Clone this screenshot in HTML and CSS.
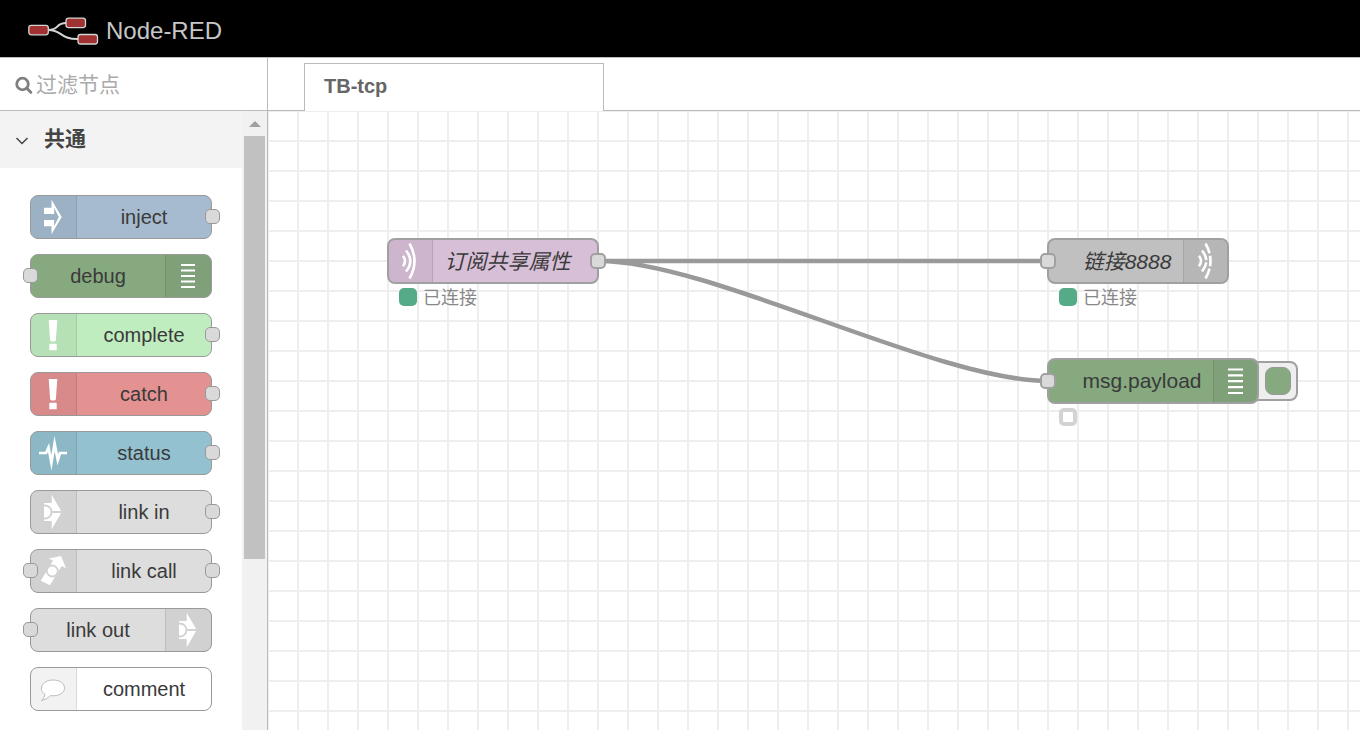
FILE: index.html
```html
<!DOCTYPE html>
<html lang="zh-CN">
<head>
<meta charset="utf-8">
<title>Node-RED</title>
<link rel="stylesheet" href="styles.css">
</head>
<body>
<svg class="sprite" aria-hidden="true">
  <symbol id="i-inject" viewBox="0 0 45 42"><path fill="#fff" d="M20.5 3.700 30.700 21 20.500 38.300V30.300H13V24H23.200V30L27.800 21 23.200 12V18H13V11.700H20.500Z"/></symbol>
  <symbol id="i-debug" viewBox="0 0 45 42"><path stroke="#fff" stroke-width="2.2" d="M15 10H29M15 15.5H29M15 21H29M15 26.5H29M15 32H29"/></symbol>
  <symbol id="i-debug-lg" viewBox="0 0 43 42"><path stroke="#fff" stroke-width="2.2" d="M14 9.500H29M14 15.400H29M14 21.200H29M14 27.100H29M14 33H29"/></symbol>
  <symbol id="i-alert" viewBox="0 0 45 42"><path fill="#fff" d="M17.700 6H26.300L24.900 26Q24.600 27.400 23.500 27.400H20.500Q19.400 27.400 19.100 26ZM19 29.700H25Q25.700 29.700 25.700 30.500V36.300H18.300V30.500Q18.300 29.700 19 29.700Z"/></symbol>
  <symbol id="i-status" viewBox="0 0 45 42"><path fill="none" stroke="#fff" stroke-width="2.700" stroke-miterlimit="20" d="M8 21H15L17.500 15.500 20.400 31 23.600 11.500 26.800 28 29 21H36"/></symbol>
  <symbol id="i-link" viewBox="0 0 45 42"><path fill="#fff" d="M13 12H20.700V3.700L30.700 21 20.700 38.300V30H13Z"/><path fill="none" stroke="#d2d2d2" stroke-width="1.800" d="M12 14.500H14A6.500 6.500 0 0 1 14 27.500H12M20.500 21H31"/></symbol>
  <symbol id="i-call" viewBox="0 0 45 42"><path fill="#fff" d="M9.700 30.700 22 10.800 18 8.500 30 6 35 18.300 30.600 16 19 35.200Z"/><circle cx="21.300" cy="21" r="5.500" fill="#fff" stroke="#d2d2d2" stroke-width="1.800"/></symbol>
  <symbol id="i-comment" viewBox="0 0 45 42"><path fill="#fff" stroke="#bdbdbd" d="M14 26.400C7 22.500 10.500 12 22 12 29 12 33.500 15.600 33.500 20 33.500 25 27.500 28.600 19.500 27.600 16.500 30.500 13.500 31.800 10.400 32.600 12.600 30.600 13.800 28.700 14 26.400Z"/></symbol>
  <symbol id="i-tcpin" viewBox="0 0 43 42"><path fill="none" stroke="#fff" stroke-width="2.600" d="M20.500 3.500Q30.500 21 20.500 38.500M17 10.500Q25.600 21 17 31.500M14 15.800Q18 21 14 26.200"/></symbol>
  <symbol id="i-tcpout" viewBox="-1 0 43 42"><g fill="none" stroke="#fff" stroke-width="2.600"><path stroke-dasharray="10.500 2.500 10.600 2.500 12" d="M20.500 3.500Q30.500 21 20.500 38.500"/><path stroke-dasharray="10.700 2.200 14" d="M17 10.500Q25.600 21 17 31.500"/><path d="M14 15.800Q18 21 14 26.200"/></g></symbol>
</svg>

<header class="header">
  <svg class="logo" width="72" height="30" viewBox="0 0 72 30" aria-hidden="true">
    <path fill="none" stroke="#d4d4d4" stroke-width="2" d="M20 14C32 14 27 7 38 7M20 14C35 14 31 23 50 23"/>
    <g fill="#a03233" stroke="#d4d4d4" stroke-width="1.300">
      <rect x=".8" y="9.300" width="19.500" height="9.500" rx="2.500"/>
      <rect x="38" y="2.100" width="19.500" height="9.500" rx="2.500"/>
      <rect x="50" y="18.500" width="19.500" height="9.500" rx="2.500"/>
    </g>
  </svg>
  <span class="brand">Node-RED</span>
</header>

<div class="workarea">
  <aside class="sidebar">
    <label class="search">
      <svg width="19" height="19" viewBox="0 0 19 19" aria-hidden="true"><circle cx="7.500" cy="8" r="5.800" fill="none" stroke="#808080" stroke-width="2.800"/><path stroke="#808080" stroke-width="3" stroke-linecap="round" d="M12 12.500 15.800 16.300"/></svg>
      <input class="search-input" type="text" placeholder="过滤节点" aria-label="过滤节点">
    </label>
    <div class="palette">
      <div class="palette-main">
        <button class="category" type="button" aria-expanded="true">
          <svg width="14" height="10" viewBox="0 0 14 10" aria-hidden="true"><path fill="none" stroke="#444" stroke-width="1.500" d="M1.500 3 7 8.500 12.500 3"/></svg>
          <span class="category-name">共通</span>
        </button>
        <ul class="node-list">
          <li class="node inject"><svg class="icon"><use href="#i-inject"/></svg><span class="label">inject</span><i class="port out"></i></li>
          <li class="node debug flip"><svg class="icon"><use href="#i-debug"/></svg><span class="label">debug</span><i class="port in"></i></li>
          <li class="node complete"><svg class="icon"><use href="#i-alert"/></svg><span class="label">complete</span><i class="port out"></i></li>
          <li class="node catch"><svg class="icon"><use href="#i-alert"/></svg><span class="label">catch</span><i class="port out"></i></li>
          <li class="node status-node"><svg class="icon"><use href="#i-status"/></svg><span class="label">status</span><i class="port out"></i></li>
          <li class="node link"><svg class="icon"><use href="#i-link"/></svg><span class="label">link in</span><i class="port out"></i></li>
          <li class="node link"><svg class="icon"><use href="#i-call"/></svg><span class="label">link call</span><i class="port in"></i><i class="port out"></i></li>
          <li class="node link flip"><svg class="icon"><use href="#i-link"/></svg><span class="label">link out</span><i class="port in"></i></li>
          <li class="node comment"><svg class="icon"><use href="#i-comment"/></svg><span class="label">comment</span></li>
        </ul>
      </div>
      <div class="scrollbar" aria-hidden="true">
        <svg width="12" height="6" viewBox="0 0 12 6"><path fill="#a0a0a0" d="M0 6 6 0 12 6Z"/></svg>
        <div class="thumb"></div>
      </div>
    </div>
  </aside>

  <main class="workspace">
    <nav class="tabs"><a class="tab" href="#tb-tcp">TB-tcp</a></nav>
    <div class="canvas" id="tb-tcp">
      <svg class="wires" aria-hidden="true"><path d="M331 150H780M331 150C443 150 668 270 780 270"/></svg>

      <div class="flow-node subscribe">
        <div class="node tcp-in"><svg class="icon"><use href="#i-tcpin"/></svg><span class="label">订阅共享属性</span><i class="port out"></i></div>
        <div class="state"><i class="dot"></i><span class="state-text">已连接</span></div>
      </div>

      <div class="flow-node connect">
        <div class="node tcp-out flip"><svg class="icon"><use href="#i-tcpout"/></svg><span class="label">链接8888</span><i class="port in"></i></div>
        <div class="state"><i class="dot"></i><span class="state-text">已连接</span></div>
      </div>

      <div class="flow-node payload">
        <button class="toggle" type="button" aria-label="msg.payload"><i class="toggle-face"></i></button>
        <div class="node debug flip"><svg class="icon"><use href="#i-debug-lg"/></svg><span class="label">msg.payload</span><i class="port in"></i></div>
        <div class="state"><i class="dot ring"></i></div>
      </div>
    </div>
  </main>
</div>
</body>
</html>
```

FILE: styles.css
```css
* {
  box-sizing: border-box;
}

body {
  display: flex;
  flex-direction: column;
  height: 100vh;
  margin: 0;
  overflow: hidden;
  background: #fff;
  color: #3a3a3a;
  font-family: "Liberation Sans", "Noto Sans CJK SC", sans-serif;
  font-size: 20px;
}

.sprite {
  position: absolute;
  width: 0;
  height: 0;
}

.header {
  display: flex;
  flex: none;
  align-items: center;
  gap: 6px;
  height: 58px;
  padding: 5px 28px 0;
  border-bottom: 1px solid #bbb;
  background: #000;
}

.brand {
  color: #c7c7c7;
  font-size: 24px;
}

.workarea {
  display: flex;
  flex: 1;
  min-height: 0;
}

/* Palette */

.sidebar {
  display: flex;
  flex: none;
  flex-direction: column;
  width: 268px;
  border-right: 1px solid #bbb;
}

.search {
  display: flex;
  flex: none;
  align-items: center;
  gap: 2px;
  height: 53px;
  padding: 2px 0 0 15px;
  border-bottom: 1px solid #bbb;
}

.search-input {
  flex: 1;
  min-width: 0;
  padding: 0;
  border: 0;
  outline: 0;
  background: none;
  color: #333;
  font: inherit;
  font-size: 21px;
}

.search-input::placeholder {
  color: #aaa;
}

.palette {
  display: flex;
  flex: 1;
  min-height: 0;
}

.palette-main {
  flex: 1;
  overflow: hidden;
}

.category {
  display: flex;
  align-items: center;
  gap: 15px;
  width: 100%;
  height: 57px;
  padding: 0 15px;
  border: 0;
  background: #f3f3f3;
  color: #444;
  font: inherit;
  font-size: 21px;
  font-weight: bold;
}

.category-name {
  padding-bottom: 5px;
}

.node-list {
  display: flex;
  flex-direction: column;
  gap: 15px;
  margin: 0;
  padding: 27px 30px;
  list-style: none;
}

.scrollbar {
  display: flex;
  flex: none;
  flex-direction: column;
  align-items: center;
  gap: 9px;
  width: 25px;
  padding: 10px 2px 0;
  background: #f1f1f1;
}

.scrollbar svg {
  flex: none;
}

.thumb {
  width: 100%;
  height: 423px;
  background: #c1c1c1;
}

/* Nodes */

.node {
  position: relative;
  display: flex;
  height: 44px;
  border: 1px solid #999;
  border-radius: 8px;
}

.flip {
  flex-direction: row-reverse;
}

.icon {
  flex: none;
  box-sizing: content-box;
  width: 45px;
  height: 100%;
  border-right: 1px solid rgba(0, 0, 0, 0.1);
  border-radius: 7px 0 0 7px;
  background: rgba(0, 0, 0, 0.05);
}

.flip .icon {
  border-right: 0;
  border-left: 1px solid rgba(0, 0, 0, 0.1);
  border-radius: 0 7px 7px 0;
}

.label {
  display: flex;
  flex: 1;
  align-items: center;
  justify-content: center;
  white-space: nowrap;
}

.port {
  position: absolute;
  top: 13px;
  width: 15px;
  height: 15px;
  border: 1px solid #999;
  border-radius: 5px;
  background: #d9d9d9;
}

.port.in {
  left: -8px;
}

.port.out {
  right: -9px;
}

.inject { background: #a6bbcf; }
.debug { background: #87a980; }
.complete { background: #c0edc0; }
.catch { background: #e49191; }
.status-node { background: #94c1d0; }
.link { background: #ddd; }
.comment { background: #fff; }
.tcp-in { background: #d8bfd8; }
.tcp-out { background: #c0c0c0; }

/* Workspace */

.workspace {
  display: flex;
  flex: 1;
  flex-direction: column;
  min-width: 0;
}

.tabs {
  display: flex;
  flex: none;
  height: 53px;
  padding: 5px 36px 0;
  border-bottom: 1px solid #bbb;
}

.tab {
  display: flex;
  align-items: center;
  width: 300px;
  margin-bottom: -1px;
  padding: 0 19px 3px;
  border: 1px solid #bbb;
  border-bottom: 0;
  background: #fff;
  color: #666;
  font-size: 20px;
  font-weight: bold;
  text-decoration: none;
}

.canvas {
  position: relative;
  flex: 1;
  overflow: hidden;
  background:
    linear-gradient(#eee 2px, transparent 2px) -1px -1px / 30px 30px,
    linear-gradient(90deg, #eee 2px, transparent 2px) -1px -1px / 30px 30px;
}

.wires {
  position: absolute;
  inset: 0;
  width: 100%;
  height: 100%;
  fill: none;
  stroke: #999;
  stroke-width: 4.5px;
}

.flow-node {
  position: absolute;
  width: 212px;
}

.subscribe {
  left: 119px;
  top: 127px;
}

.connect {
  left: 779px;
  top: 127px;
  width: 182px;
}

.payload {
  left: 779px;
  top: 247px;
}

.flow-node .node {
  height: 46px;
  border: 2px solid #a0a0a0;
  font-size: 21px;
}

.flow-node .icon {
  width: 43px;
}

.flow-node .port {
  width: 16px;
  height: 16px;
  border: 2px solid #a0a0a0;
}

.flow-node .port.in {
  left: -9px;
}

.subscribe .label,
.connect .label {
  padding-bottom: 2px;
  font-style: italic;
}

.subscribe .label {
  padding-right: 15px;
}

.flow-node .flip .label {
  padding-left: 22px;
}

.state {
  display: flex;
  align-items: center;
  gap: 6px;
  height: 25px;
  padding-left: 12px;
  color: #888;
  font-size: 18px;
}

.state-text {
  padding-bottom: 2px;
}

.dot {
  width: 18px;
  height: 18px;
  border-radius: 5px;
  background: #5a8;
}

.ring {
  border: 4px solid #d3d3d3;
  background: #fff;
}

.toggle {
  position: absolute;
  top: 3px;
  right: -39px;
  display: flex;
  align-items: center;
  justify-content: flex-end;
  width: 48px;
  height: 40px;
  padding: 0 5px;
  border: 2px solid #a0a0a0;
  border-radius: 8px;
  background: #eee;
}

.toggle-face {
  width: 26px;
  height: 28px;
  border: 1px solid #999;
  border-radius: 8px;
  background: #87a980;
}
```
